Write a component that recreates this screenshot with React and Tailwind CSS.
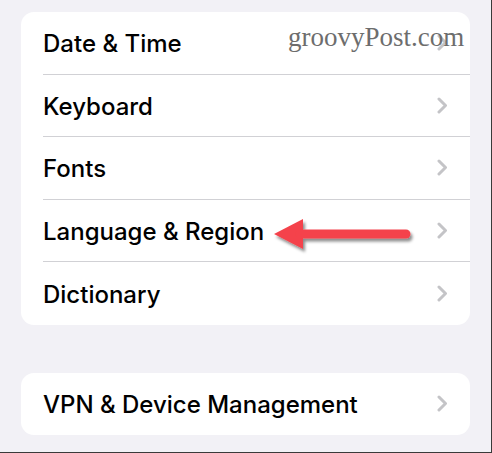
const MAIN_ROWS = ["Date & Time", "Keyboard", "Fonts", "Language & Region", "Dictionary"];

function Chevron() {
  return (
    <svg width="11" height="17" viewBox="0 0 11 17" className="shrink-0">
      <path d="M2 2 L8.5 8.5 L2 15" fill="none" stroke="#c4c4c7" strokeWidth="3" strokeLinecap="round" strokeLinejoin="round" />
    </svg>
  );
}

function Arrow() {
  return (
    <svg width="150" height="44" viewBox="0 0 150 44" className="absolute left-[249px] top-[18px] pointer-events-none">
      <defs>
        <filter id="sh" x="-10%" y="-30%" width="130%" height="170%">
          <feDropShadow dx="2" dy="3" stdDeviation="1.6" floodColor="#000" floodOpacity="0.45" />
        </filter>
      </defs>
      <g filter="url(#sh)">
        <path d="M4 16 L33 1 L33 31 Z" fill="#f4434b" />
        <line x1="30" y1="16" x2="136" y2="16" stroke="#f4434b" strokeWidth="9" strokeLinecap="round" />
      </g>
    </svg>
  );
}

function Row({ label, last, children }) {
  return (
    <div className="relative flex items-center h-[62.5px] pl-[22px]">
      <div className={`flex items-center justify-between h-full flex-1 pr-[22px] ${last ? "" : "border-b border-[#d1d1d5]"}`}>
        <span className="text-[24px] font-medium text-black pt-[3px]">{label}</span>
        <Chevron />
      </div>
      {children}
    </div>
  );
}

export default function App() {
  return (
    <div
      className="w-[492px] h-[453px] bg-[#f2f1f6] relative overflow-hidden border-r border-b border-[#3a3a3a]"
      style={{ fontFamily: "Inter, 'Liberation Sans', sans-serif" }}
    >
      <div className="pt-[12px] px-[21px]">
        <div className="bg-white rounded-[13px] overflow-hidden">
          {MAIN_ROWS.map((label, i) => (
            <Row key={label} label={label} last={i === MAIN_ROWS.length - 1}>
              {label === "Language & Region" && <Arrow />}
            </Row>
          ))}
        </div>
        <div className="bg-white rounded-[13px] mt-[48px] overflow-hidden">
          <Row label="VPN & Device Management" last />
        </div>
      </div>
      <div
        className="absolute left-[288px] top-[24px] text-[27px] text-[#6d6d6d] leading-none"
        style={{ fontFamily: "'Liberation Serif', 'DejaVu Serif', serif" }}
      >
        groovyPost.com
      </div>
    </div>
  );
}
